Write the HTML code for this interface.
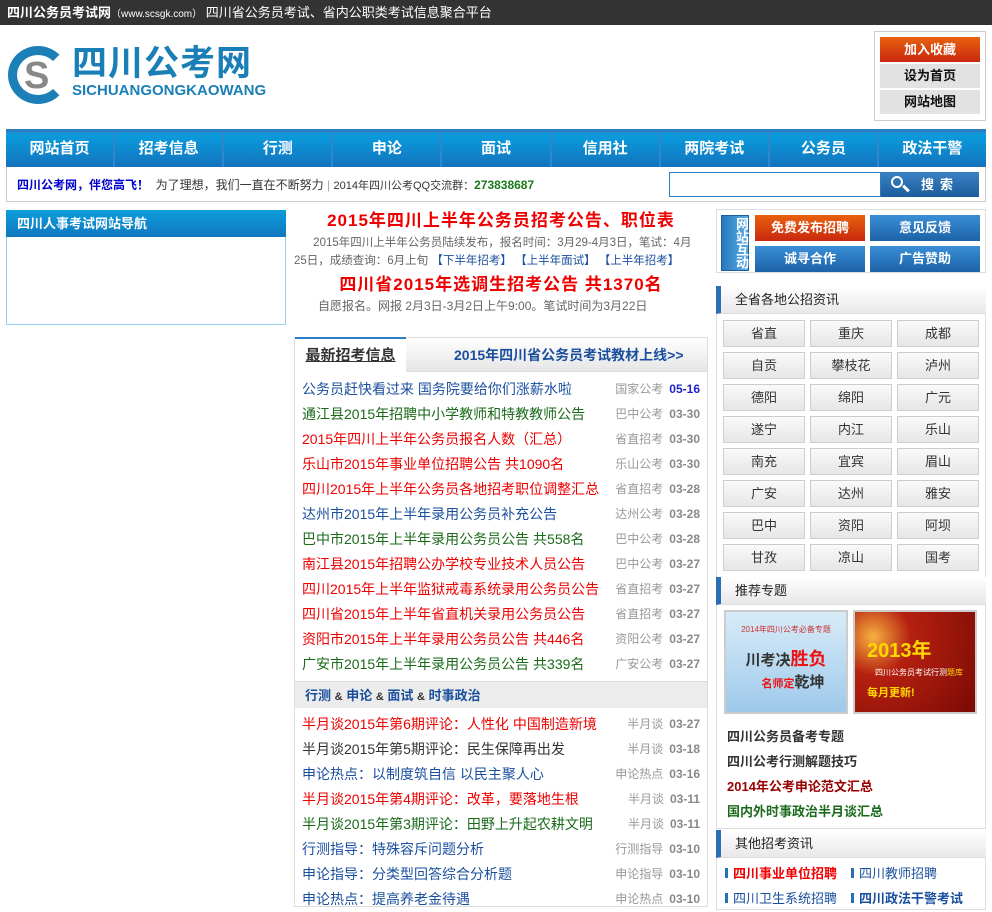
<!DOCTYPE html>
<html><head><meta charset="utf-8"><style>
*{margin:0;padding:0;box-sizing:border-box}
body{width:992px;height:902px;overflow:hidden;background:#fff;font-family:"Liberation Sans","Noto Sans CJK SC",sans-serif;font-size:12px;color:#333;position:relative}
.a{position:absolute}
.top{left:0;top:0;width:992px;height:25px;background:#333;color:#fff;font-size:13px;line-height:25px;padding-left:7px}
.nav{left:6px;top:129px;width:980px;height:38px;background:linear-gradient(#1e8fd2,#0a9bdc 10%,#1373bd);border-top:3px solid #2a7fc4;display:flex}
.nav div{flex:1;color:#fff;font-weight:bold;font-size:15px;text-align:center;line-height:34px;border-right:2px solid #2f86c9}
.info{left:6px;top:167px;width:980px;height:35px;border:1px solid #ccc;border-top:none}
.hd{background:linear-gradient(#fff,#e8e8e8);border-bottom:1px solid #ddd;height:28px;line-height:28px;font-size:13px;color:#222;padding-left:14px;border-left:5px solid #2a6fb5}
.box{border:1px solid #ddd}
.li{position:absolute;left:8px;right:8px;height:25px;line-height:25px;font-size:14px}
.li span{position:absolute;right:0;font-size:12px;color:#999}
.li b{font-weight:bold;color:#888;margin-left:6px}
.g{position:absolute;width:82px;height:27px;border:1px solid #ccc;background:linear-gradient(#fafafa,#e6e6e6);text-align:center;line-height:25px;font-size:13px;color:#333}
.btn{position:absolute;width:110px;height:26px;color:#fff;font-weight:bold;font-size:13px;text-align:center;line-height:26px;background:linear-gradient(#3b8fd6,#1c62a8)}
</style></head><body>
<div class="a top"><b style="font-size:13px">四川公务员考试网</b><span style="font-size:10px">（www.scsgk.com）</span> 四川省公务员考试、省内公职类考试信息聚合平台</div>

<div class="a" style="left:8px;top:46px;width:60px;height:58px;border-radius:50%;border:9px solid #1c7fb8;border-right-color:transparent"></div>
<div class="a" style="left:24px;top:58px;font-size:38px;font-weight:bold;color:#888;line-height:36px">S</div>
<div class="a" style="left:72px;top:44px;font-size:35px;font-weight:bold;color:#1a7fb6;line-height:40px;letter-spacing:1px">四川公考网</div>
<div class="a" style="left:72px;top:83px;font-size:15px;font-weight:bold;color:#1a7fb6;line-height:16px">SICHUANGONGKAOWANG</div>

<div class="a" style="left:874px;top:31px;width:112px;height:90px;border:1px solid #ccc"></div>
<div class="a" style="left:880px;top:37px;width:100px;height:25px;background:linear-gradient(#e8620f,#c9280e);color:#fff;font-weight:bold;font-size:13px;text-align:center;line-height:25px">加入收藏</div>
<div class="a" style="left:880px;top:64px;width:100px;height:24px;background:#e2e2e2;color:#111;font-weight:bold;font-size:13px;text-align:center;line-height:24px">设为首页</div>
<div class="a" style="left:880px;top:90px;width:100px;height:24px;background:#e2e2e2;color:#111;font-weight:bold;font-size:13px;text-align:center;line-height:24px">网站地图</div>

<div class="a nav"><div>网站首页</div><div>招考信息</div><div>行测</div><div>申论</div><div>面试</div><div>信用社</div><div>两院考试</div><div>公务员</div><div style="border:none">政法干警</div></div>
<div class="a info"></div>
<div class="a" style="left:17px;top:177px;font-size:12px;line-height:16px"><b style="color:#00c">四川公考网，伴您高飞！</b>&nbsp; 为了理想，我们一直在不断努力 <span style="color:#aaa">|</span> <span style="font-size:11px">2014年四川公考QQ交流群：</span><b style="color:#1a7a1a">273838687</b></div>
<div class="a" style="left:669px;top:172px;width:212px;height:25px;border:1px solid #2a7fc4"></div>
<div class="a" style="left:881px;top:172px;width:98px;height:25px;background:linear-gradient(#3b82c4,#1b5c9c);color:#fff;font-weight:bold;font-size:13px;line-height:25px;padding-left:40px;letter-spacing:6px">搜索</div>
<div class="a" style="left:891px;top:176px;width:12px;height:12px;border:2px solid #fff;border-radius:50%"></div>
<div class="a" style="left:902px;top:187px;width:8px;height:3px;background:#fff;transform:rotate(45deg)"></div>

<div class="a" style="left:6px;top:210px;width:280px;height:115px;border:1px solid #99ccee"></div>
<div class="a" style="left:6px;top:210px;width:280px;height:27px;background:linear-gradient(#0b9ddb,#1177bf);color:#fff;font-weight:bold;font-size:13px;line-height:27px;padding-left:11px">四川人事考试网站导航</div>

<div class="a" style="left:294px;top:209px;width:414px;text-align:center;font-size:17px;font-weight:bold;color:#e00;line-height:24px;letter-spacing:1px">2015年四川上半年公务员招考公告、职位表</div>
<div class="a" style="left:294px;top:234px;width:414px;font-size:11.5px;color:#666;line-height:18px;white-space:nowrap">&nbsp;&nbsp;&nbsp;&nbsp;&nbsp;&nbsp;2015年四川上半年公务员陆续发布，报名时间：3月29-4月3日，笔试：4月<br>25日，成绩查询：6月上旬 <span style="color:#1a4f9e">【下半年招考】</span> <span style="color:#1a4f9e">【上半年面试】</span> <span style="color:#1a4f9e">【上半年招考】</span></div>
<div class="a" style="left:294px;top:273px;width:414px;text-align:center;font-size:17px;font-weight:bold;color:#e00;line-height:24px;letter-spacing:1px">四川省2015年选调生招考公告 共1370名</div>
<div class="a" style="left:318px;top:298px;font-size:12px;color:#666;line-height:16px">自愿报名。网报 2月3日-3月2日上午9:00。笔试时间为3月22日</div>

<div class="a box" style="left:294px;top:337px;width:414px;height:570px"></div>
<div class="a" style="left:295px;top:338px;width:412px;height:34px;background:linear-gradient(#fff,#e6e6e6);border-bottom:1px solid #ddd"></div>
<div class="a" style="left:295px;top:337px;width:111px;height:36px;background:#fff;border-top:2px solid #2a7fc4;font-size:15px;font-weight:bold;color:#333;line-height:34px;text-align:center"><u>最新招考信息</u></div>
<div class="a" style="left:454px;top:345px;font-size:14px;font-weight:bold;color:#1a4f9e;line-height:20px">2015年四川省公务员考试教材上线&gt;&gt;</div>
<div class="a" style="left:294px;top:377px;width:414px;height:305px">
<div class="li" style="top:0;color:#1a4f9e">公务员赶快看过来 国务院要给你们涨薪水啦<span>国家公考<b style="color:#22c">05-16</b></span></div>
<div class="li" style="top:25px;color:#1a6a1a">通江县2015年招聘中小学教师和特教教师公告<span>巴中公考<b>03-30</b></span></div>
<div class="li" style="top:50px;color:#e00">2015年四川上半年公务员报名人数（汇总）<span>省直招考<b>03-30</b></span></div>
<div class="li" style="top:75px;color:#e00">乐山市2015年事业单位招聘公告 共1090名<span>乐山公考<b>03-30</b></span></div>
<div class="li" style="top:100px;color:#e00">四川2015年上半年公务员各地招考职位调整汇总<span>省直招考<b>03-28</b></span></div>
<div class="li" style="top:125px;color:#1a4f9e">达州市2015年上半年录用公务员补充公告<span>达州公考<b>03-28</b></span></div>
<div class="li" style="top:150px;color:#1a6a1a">巴中市2015年上半年录用公务员公告 共558名<span>巴中公考<b>03-28</b></span></div>
<div class="li" style="top:175px;color:#e00">南江县2015年招聘公办学校专业技术人员公告<span>巴中公考<b>03-27</b></span></div>
<div class="li" style="top:200px;color:#e00">四川2015年上半年监狱戒毒系统录用公务员公告<span>省直招考<b>03-27</b></span></div>
<div class="li" style="top:225px;color:#e00">四川省2015年上半年省直机关录用公务员公告<span>省直招考<b>03-27</b></span></div>
<div class="li" style="top:250px;color:#e00">资阳市2015年上半年录用公务员公告 共446名<span>资阳公考<b>03-27</b></span></div>
<div class="li" style="top:275px;color:#1a6a1a">广安市2015年上半年录用公务员公告 共339名<span>广安公考<b>03-27</b></span></div>
</div>
<div class="a" style="left:295px;top:681px;width:412px;height:27px;background:#ececec;border-top:1px solid #ddd;font-size:13px;font-weight:bold;color:#1a4f9e;line-height:27px;padding-left:10px">行测 <span style="color:#333;font-size:11px">&amp;</span> 申论 <span style="color:#333;font-size:11px">&amp;</span> 面试 <span style="color:#333;font-size:11px">&amp;</span> 时事政治</div>
<div class="a" style="left:294px;top:712px;width:414px;height:200px">
<div class="li" style="top:0;color:#e00">半月谈2015年第6期评论：人性化 中国制造新境<span>半月谈<b>03-27</b></span></div>
<div class="li" style="top:25px;color:#333">半月谈2015年第5期评论：民生保障再出发<span>半月谈<b>03-18</b></span></div>
<div class="li" style="top:50px;color:#1a4f9e">申论热点：以制度筑自信 以民主聚人心<span>申论热点<b>03-16</b></span></div>
<div class="li" style="top:75px;color:#e00">半月谈2015年第4期评论：改革，要落地生根<span>半月谈<b>03-11</b></span></div>
<div class="li" style="top:100px;color:#1a6a1a">半月谈2015年第3期评论：田野上升起农耕文明<span>半月谈<b>03-11</b></span></div>
<div class="li" style="top:125px;color:#1a4f9e">行测指导：特殊容斥问题分析<span>行测指导<b>03-10</b></span></div>
<div class="li" style="top:150px;color:#1a4f9e">申论指导：分类型回答综合分析题<span>申论指导<b>03-10</b></span></div>
<div class="li" style="top:175px;color:#1a4f9e">申论热点：提高养老金待遇<span>申论热点<b>03-10</b></span></div>
</div>

<div class="a box" style="left:716px;top:209px;width:270px;height:64px"></div>
<div class="a" style="left:721px;top:215px;width:28px;height:56px;background:linear-gradient(90deg,#2a78c0,#5aaee6);color:#fff;font-size:13px;font-weight:bold;line-height:14px;text-align:center;writing-mode:vertical-rl;border:1px solid #1a5f9e">网站互动</div>
<div class="btn" style="left:755px;top:215px;background:linear-gradient(#e8620f,#c9280e)">免费发布招聘</div>
<div class="btn" style="left:870px;top:215px">意见反馈</div>
<div class="btn" style="left:755px;top:246px">诚寻合作</div>
<div class="btn" style="left:870px;top:246px">广告赞助</div>

<div class="a box" style="left:716px;top:286px;width:270px;height:294px"></div>
<div class="a hd" style="left:716px;top:286px;width:270px">全省各地公招资讯</div>
<div class="a" style="left:723px;top:320px">
<div class="g" style="left:0;top:0">省直</div><div class="g" style="left:87px;top:0">重庆</div><div class="g" style="left:174px;top:0">成都</div>
<div class="g" style="left:0;top:32px">自贡</div><div class="g" style="left:87px;top:32px">攀枝花</div><div class="g" style="left:174px;top:32px">泸州</div>
<div class="g" style="left:0;top:64px">德阳</div><div class="g" style="left:87px;top:64px">绵阳</div><div class="g" style="left:174px;top:64px">广元</div>
<div class="g" style="left:0;top:96px">遂宁</div><div class="g" style="left:87px;top:96px">内江</div><div class="g" style="left:174px;top:96px">乐山</div>
<div class="g" style="left:0;top:128px">南充</div><div class="g" style="left:87px;top:128px">宜宾</div><div class="g" style="left:174px;top:128px">眉山</div>
<div class="g" style="left:0;top:160px">广安</div><div class="g" style="left:87px;top:160px">达州</div><div class="g" style="left:174px;top:160px">雅安</div>
<div class="g" style="left:0;top:192px">巴中</div><div class="g" style="left:87px;top:192px">资阳</div><div class="g" style="left:174px;top:192px">阿坝</div>
<div class="g" style="left:0;top:224px">甘孜</div><div class="g" style="left:87px;top:224px">凉山</div><div class="g" style="left:174px;top:224px">国考</div>
</div>

<div class="a box" style="left:716px;top:577px;width:270px;height:252px"></div>
<div class="a hd" style="left:716px;top:577px;width:270px">推荐专题</div>
<div class="a" style="left:724px;top:610px;width:124px;height:104px;border:2px solid #ccc;background:linear-gradient(#d8ecf8,#9ec9ea);text-align:center">
<div style="font-size:8px;color:#c33;margin-top:12px">2014年四川公考必备专题</div>
<div style="font-size:15px;font-weight:bold;color:#333;margin-top:10px">川考决<span style="color:#e11;font-size:18px">胜负</span></div>
<div style="font-size:15px;font-weight:bold;color:#333;padding-left:14px"><span style="color:#e11;font-size:11px">名师定</span>乾坤</div></div>
<div class="a" style="left:853px;top:610px;width:124px;height:104px;border:2px solid #ccc;background:radial-gradient(circle at 15% 25%,#f7b040,#b52010 30%,#7a0a05)">
<div style="font-size:20px;font-weight:bold;color:#ffd800;margin:22px 0 0 12px">2013年</div>
<div style="font-size:8px;color:#fff;margin:4px 0 0 20px">四川公务员考试行测<span style="color:#ffd800">题库</span></div>
<div style="font-size:11px;font-weight:bold;color:#ffd800;margin:6px 0 0 12px">每月更新!</div></div>
<div class="a" style="left:727px;top:724px;font-size:13px;font-weight:bold;line-height:25px">
<div style="color:#333">四川公务员备考专题</div><div style="color:#333">四川公考行测解题技巧</div><div style="color:#900">2014年公考申论范文汇总</div><div style="color:#1a6a1a">国内外时事政治半月谈汇总</div></div>

<div class="a box" style="left:716px;top:830px;width:270px;height:80px"></div>
<div class="a hd" style="left:716px;top:830px;width:270px">其他招考资讯</div>
<div class="a" style="left:725px;top:861px;font-size:13px;line-height:25px;width:260px">
<div><span style="display:inline-block;width:3px;height:10px;background:#2a6fb5;margin-right:5px"></span><b style="color:#e00">四川事业单位招聘</b><span style="display:inline-block;width:3px;height:10px;background:#2a6fb5;margin:0 5px 0 14px"></span><span style="color:#1a4f9e">四川教师招聘</span></div>
<div><span style="display:inline-block;width:3px;height:10px;background:#2a6fb5;margin-right:5px"></span><span style="color:#1a4f9e">四川卫生系统招聘</span><span style="display:inline-block;width:3px;height:10px;background:#2a6fb5;margin:0 5px 0 14px"></span><b style="color:#1a4f9e">四川政法干警考试</b></div></div>
</body></html>
